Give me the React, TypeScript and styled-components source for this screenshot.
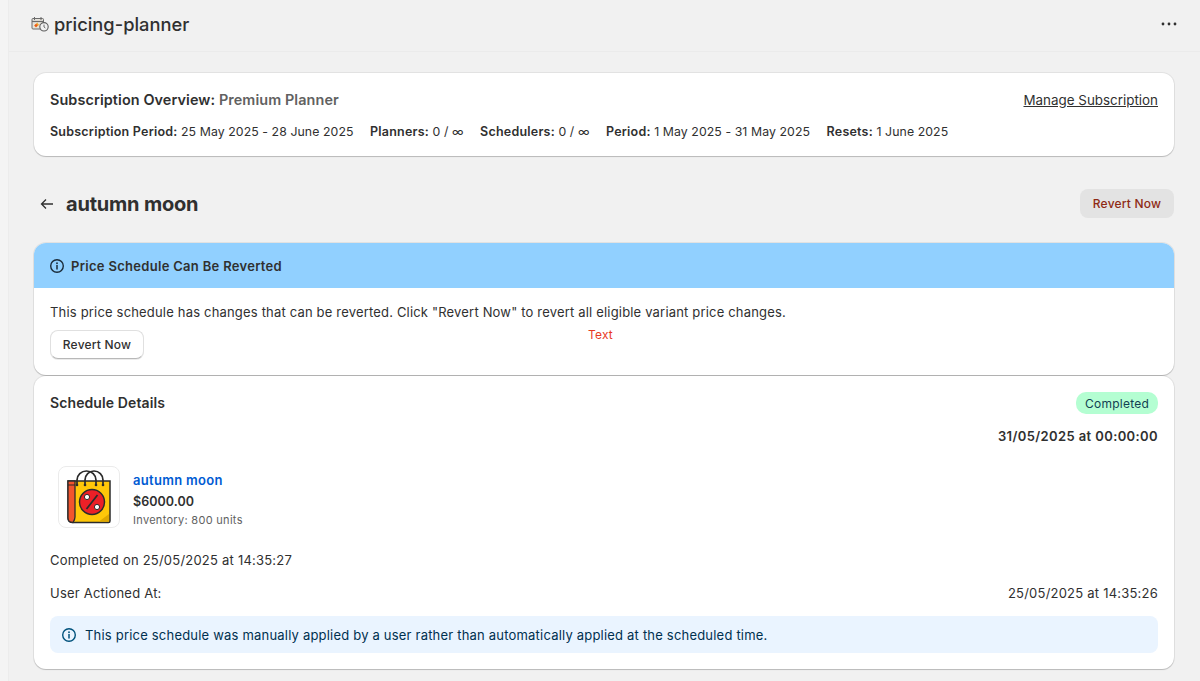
import React from "react";
import styled, { createGlobalStyle } from "styled-components";

const Global = createGlobalStyle`
  html, body { margin: 0; padding: 0; background: #f1f1f1; }
  body { font-family: Inter, "Liberation Sans", sans-serif; color: #303030; -webkit-font-smoothing: antialiased; }
  #root { height: 681px; overflow: hidden; }
`;

const Page = styled.div`
  display: flex;
  height: 681px;
  overflow: hidden;
`;
const Gutter = styled.div`
  width: 8px;
  flex: none;
  background: #f4f4f4;
`;
const Main = styled.div`
  flex: 1;
  min-width: 0;
  background: #f1f1f1;
  border-left: 1px solid #ececec;
`;
const TopBar = styled.header`
  height: 52px;
  box-sizing: border-box;
  border-bottom: 1px solid #ebebeb;
  display: flex;
  align-items: center;
  justify-content: space-between;
  padding: 0 23px 4px 22px;
`;
const AppName = styled.div`
  display: flex;
  align-items: center;
  gap: 5px;
  font-size: 18.3px;
  font-weight: 500;
  color: #303030;
`;
const Content = styled.main`
  padding: 21px 26px 0 25px;
  display: flex;
  flex-direction: column;
`;
const Card = styled.section`
  background: #fff;
  border-radius: 12px;
  box-shadow: 0 1px 1px rgba(0,0,0,.18), 0 0 0 1px rgba(0,0,0,.06);
  overflow: hidden;
`;
const Overview = styled(Card)`
  height: 83px;
  box-sizing: border-box;
  padding: 17px 16px 0;
`;
const Row = styled.div`
  display: flex;
  justify-content: space-between;
  align-items: center;
`;
const OverviewTitle = styled.div`
  font-size: 14.4px;
  font-weight: 600;
  line-height: 20px;
  letter-spacing: .1px;
  span { color: #616161; }
`;
const Link = styled.a`
  font-size: 13.4px;
  line-height: 20px;
  color: #303030;
  text-decoration: underline;
`;
const Stats = styled.div`
  display: flex;
  gap: 16.5px;
  margin-top: 12px;
  font-size: 12.3px;
  line-height: 20px;
  letter-spacing: .08px;
  b { font-weight: 600; font-size: 12.5px; letter-spacing: .22px; }
`;
const TitleBar = styled(Row)`
  height: 36px;
  margin: 30px 0 21px;
`;
const TitleLeft = styled.div`
  display: flex;
  align-items: center;
  gap: 11px;
`;
const BackIcon = styled.svg`
  width: 16px;
  height: 16px;
  margin-left: 5px;
  color: #303030;
`;
const PageTitle = styled.h1`
  margin: 0;
  font-size: 20px;
  line-height: 28px;
  font-weight: 700;
  letter-spacing: -.2px;
`;
const DisabledBtn = styled.button`
  width: 94px;
  height: 29px;
  margin-bottom: 2px;
  border: 0;
  padding: 0;
  border-radius: 8px;
  background: #e3e3e3;
  color: #8e2a14;
  font: 500 12px Inter, sans-serif;
  letter-spacing: .2px;
`;
const BannerHead = styled.div`
  height: 45px;
  background: #91d0ff;
  display: flex;
  align-items: center;
  gap: 6px;
  padding: 0 15px;
  font-size: 13px;
  font-weight: 600;
  letter-spacing: .3px;
`;
const BannerBody = styled.div`
  position: relative;
  height: 87px;
  box-sizing: border-box;
  padding: 14px 16px 0;
  font-size: 13px;
  line-height: 20px;
  letter-spacing: .18px;
`;
const Btn = styled.button`
  display: block;
  margin-top: 8px;
  width: 94px;
  height: 29px;
  padding: 0;
  background: #fff;
  border: 1px solid #e0e0e0;
  border-bottom-color: #b8b8b8;
  border-radius: 8px;
  box-shadow: 0 1px 0 rgba(0,0,0,.08);
  color: #303030;
  font: 500 12px Inter, sans-serif;
  letter-spacing: .2px;
`;
const RedText = styled.span`
  position: absolute;
  left: 554px;
  top: 38px;
  color: #e8391f;
  font-size: 12px;
  line-height: 18px;
`;
const Details = styled(Card)`
  height: 293px;
  margin-top: 1px;
  box-sizing: border-box;
  padding: 16px 16px 0;
`;
const SectionTitle = styled.h2`
  margin: 0;
  font-size: 14px;
  line-height: 22px;
  font-weight: 600;
  letter-spacing: .1px;
`;
const Badge = styled.span`
  background: #b4fed2;
  color: #123f52;
  border-radius: 10px;
  height: 22px;
  width: 82px;
  display: flex;
  align-items: center;
  justify-content: center;
  font-size: 12px;
  font-weight: 400;
  letter-spacing: .25px;
`;
const DateLine = styled.div`
  margin-top: 12px;
  text-align: right;
  font-size: 13px;
  line-height: 20px;
  font-weight: 600;
  letter-spacing: .38px;
`;
const Product = styled.div`
  display: flex;
  align-items: center;
  gap: 13px;
  margin: 20px 0 0 8px;
  height: 62px;
`;
const Thumb = styled.div`
  width: 62px;
  height: 62px;
  box-sizing: border-box;
  border: 1px solid #ebebeb;
  border-radius: 8px;
  display: flex;
  align-items: center;
  justify-content: center;
`;
const ProductInfo = styled.div`
  display: flex;
  flex-direction: column;
  padding-top: 5px;
`;
const ProductName = styled.a`
  color: #005bd3;
  font-size: 13px;
  line-height: 18px;
  font-weight: 600;
  letter-spacing: .3px;
`;
const Price = styled.div`
  margin-top: 4px;
  font-size: 12.5px;
  line-height: 18px;
  font-weight: 600;
  letter-spacing: .05px;
`;
const Muted = styled.div`
  margin-top: 1px;
  color: #616161;
  font-size: 11px;
  line-height: 16px;
  letter-spacing: .3px;
`;
const Line = styled.div<{ $top: number }>`
  margin-top: ${p => p.$top}px;
  font-size: 13px;
  line-height: 20px;
  letter-spacing: .22px;
  display: flex;
  justify-content: space-between;
`;
const Note = styled.div`
  margin-top: 13px;
  height: 37px;
  background: #eaf4ff;
  border-radius: 8px;
  display: flex;
  align-items: center;
  gap: 8px;
  padding: 0 11px;
  color: #00304f;
  font-size: 13px;
  letter-spacing: .2px;
`;
const Dots = styled.svg`
  width: 16px;
  height: 4px;
  color: #303030;
`;

const Info = ({ color }: { color: string }) => (
  <svg width="16" height="16" viewBox="0 0 16 16" fill="none" style={{ flex: "none" }}>
    <circle cx="8" cy="8" r="6.3" stroke={color} strokeWidth="1.4" />
    <path d="M8 7.4v3.6" stroke={color} strokeWidth="1.5" strokeLinecap="round" />
    <circle cx="8" cy="5.2" r=".9" fill={color} />
  </svg>
);

const AppIcon = () => (
  <svg width="18" height="16" viewBox="0 0 18 16" fill="none">
    <rect x="1" y="2.5" width="11.5" height="10.5" rx="1" fill="#e6e3dc" stroke="#6b6b6b" strokeWidth="1" />
    <path d="M1 5.5h11.5" stroke="#6b6b6b" strokeWidth="1.2" />
    <path d="M3.5 1v3M10 1v3" stroke="#6b6b6b" strokeWidth="1" />
    <path d="M3 9.500 6.500 6.500 7 8.500 9 8 5 11.500Z" fill="#f0a21f" />
    <circle cx="5" cy="9.500" r="1.200" fill="#e8502a" />
    <circle cx="13" cy="10.800" r="4.200" fill="#f1f1f1" stroke="#5f5f5f" strokeWidth="1.100" />
    <path d="M13 8.600v2.400l1.400 1" stroke="#5f5f5f" strokeWidth=".9" />
  </svg>
);

const BagIcon = () => (
  <svg width="44" height="54" viewBox="0 0 44 54" fill="none">
    <path d="M1 11H43V51a1.500 1.500 0 0 1-1.500 1.500H6Q1 52.500 1 48Z" fill="#ffc709" stroke="#2b2b2b" strokeWidth="1.500" />
    <path d="M1 11H8V47Q8 49.500 6 52.500 1 52.500 1 48Z" fill="#f2542d" stroke="#2b2b2b" strokeWidth="1.300" />
    <path d="M1 15H8" stroke="#2b2b2b" strokeWidth="1.100" />
    <path d="M10 15V10A9.500 9 0 0 1 29 10V15" stroke="#2b2b2b" strokeWidth="1.700" />
    <path d="M18 15V10A9 9 0 0 1 36 10V15" stroke="#2b2b2b" strokeWidth="1.700" />
    <circle cx="25" cy="32" r="12.500" fill="#ec2027" stroke="#2b2b2b" strokeWidth="1.500" />
    <path d="M30.500 25 19.500 39" stroke="#2b2b2b" strokeWidth="1.700" />
    <circle cx="20" cy="27" r="2.600" fill="#fff" stroke="#2b2b2b" strokeWidth="1" />
    <circle cx="30" cy="37" r="2.600" fill="#fff" stroke="#2b2b2b" strokeWidth="1" />
    <circle cx="10" cy="15" r="1.300" fill="#2b2b2b" />
    <circle cx="29" cy="15" r="1.300" fill="#2b2b2b" />
    <circle cx="18" cy="15" r="1.300" fill="#2b2b2b" />
    <circle cx="36" cy="15" r="1.300" fill="#2b2b2b" />
    <path d="M42 44 32 51.500H42Z" fill="#e0a800" />
  </svg>
);

export default function App() {
  return (
    <Page>
      <Global />
      <Gutter />
      <Main>
        <TopBar>
          <AppName>
            <AppIcon />
            pricing-planner
          </AppName>
          <Dots viewBox="0 0 16 4" fill="currentColor">
            <circle cx="2" cy="2" r="1.400" />
            <circle cx="8" cy="2" r="1.400" />
            <circle cx="14" cy="2" r="1.400" />
          </Dots>
        </TopBar>
        <Content>
          <Overview>
            <Row>
              <OverviewTitle>Subscription Overview: <span>Premium Planner</span></OverviewTitle>
              <Link>Manage Subscription</Link>
            </Row>
            <Stats>
              <div><b>Subscription Period:</b> 25 May 2025 - 28 June 2025</div>
              <div><b>Planners:</b> 0 / ∞</div>
              <div><b>Schedulers:</b> 0 / ∞</div>
              <div><b>Period:</b> 1 May 2025 - 31 May 2025</div>
              <div><b>Resets:</b> 1 June 2025</div>
            </Stats>
          </Overview>
          <TitleBar>
            <TitleLeft>
              <BackIcon viewBox="0 0 16 16" fill="none">
                <path d="M14 8H2.500M7 3.500 2.500 8 7 12.500" stroke="currentColor" strokeWidth="1.300" />
              </BackIcon>
              <PageTitle>autumn moon</PageTitle>
            </TitleLeft>
            <DisabledBtn>Revert Now</DisabledBtn>
          </TitleBar>
          <Card>
            <BannerHead>
              <Info color="#1a2b3a" />
              Price Schedule Can Be Reverted
            </BannerHead>
            <BannerBody>
              This price schedule has changes that can be reverted. Click "Revert Now" to revert all eligible variant price changes.
              <RedText>Text</RedText>
              <Btn>Revert Now</Btn>
            </BannerBody>
          </Card>
          <Details>
            <Row>
              <SectionTitle>Schedule Details</SectionTitle>
              <Badge>Completed</Badge>
            </Row>
            <DateLine>31/05/2025 at 00:00:00</DateLine>
            <Product>
              <Thumb><BagIcon /></Thumb>
              <ProductInfo>
                <ProductName>autumn moon</ProductName>
                <Price>$6000.00</Price>
                <Muted>Inventory: 800 units</Muted>
              </ProductInfo>
            </Product>
            <Line $top={22}>Completed on 25/05/2025 at 14:35:27</Line>
            <Line $top={13}>
              <span>User Actioned At:</span>
              <span>25/05/2025 at 14:35:26</span>
            </Line>
            <Note>
              <Info color="#00527c" />
              This price schedule was manually applied by a user rather than automatically applied at the scheduled time.
            </Note>
          </Details>
        </Content>
      </Main>
    </Page>
  );
}
